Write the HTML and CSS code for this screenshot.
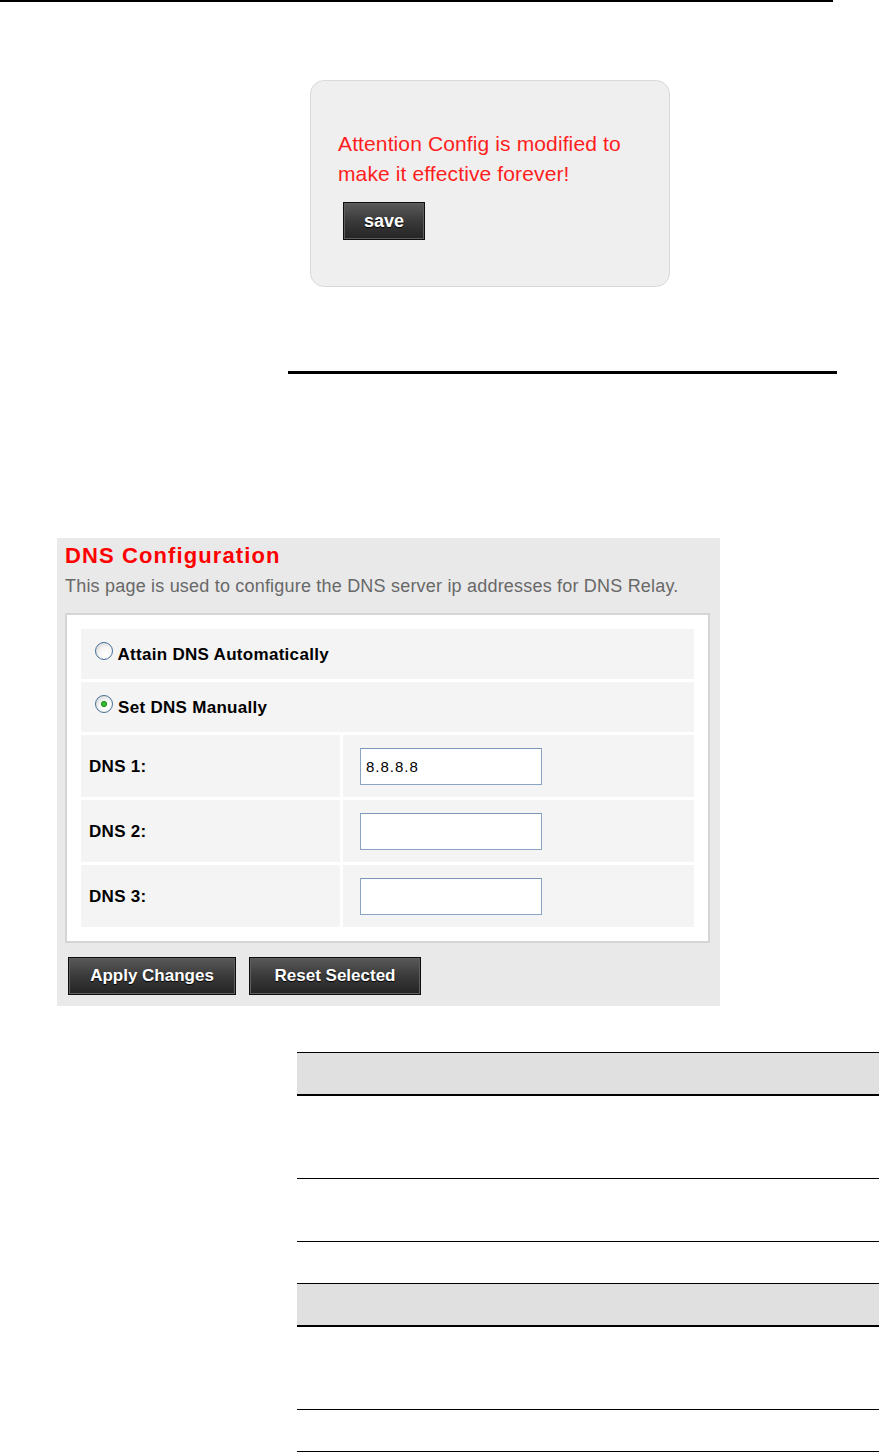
FILE: index.html
```html
<!DOCTYPE html>
<html>
<head>
   <meta charset="utf-8">
   <title>DNS Configuration</title>
   <link rel="stylesheet" href="styles.css">
</head>
<body>
   <div class="page-rule"></div>

   <div class="notice">
       <p class="notice-text">Attention Config is modified to<br>make it effective forever!</p>
       <button type="button" class="btn btn-save">save</button>
   </div>

   <hr class="section-rule">

   <form class="dns-panel" id="dnsForm">
       <h2 class="dns-title">DNS Configuration</h2>
       <p class="dns-desc">This page is used to configure the DNS server ip addresses for DNS Relay.</p>
       <div class="dns-box">
           <table class="dns-table">
               <tr class="row-radio">
                   <td colspan="2"><label><input type="radio" name="dnsMode" value="auto"> Attain DNS Automatically</label></td>
               </tr>
               <tr class="row-radio">
                   <td colspan="2"><label><input type="radio" name="dnsMode" value="manual" checked> Set DNS Manually</label></td>
               </tr>
               <tr class="row-field">
                   <td class="label">DNS 1:</td>
                   <td><input type="text" name="dns1" value="8.8.8.8"></td>
               </tr>
               <tr class="row-field">
                   <td class="label">DNS 2:</td>
                   <td><input type="text" name="dns2"></td>
               </tr>
               <tr class="row-field">
                   <td class="label">DNS 3:</td>
                   <td><input type="text" name="dns3"></td>
               </tr>
           </table>
       </div>
       <div class="dns-actions">
           <button type="submit" class="btn btn-apply">Apply Changes</button>
           <button type="reset" class="btn btn-reset">Reset Selected</button>
       </div>
   </form>

   <div class="doc-table doc-table-first">
       <div class="doc-head"></div>
       <div class="doc-row row-lg"></div>
       <div class="doc-row row-md"></div>
   </div>

   <div class="doc-table">
       <div class="doc-head"></div>
       <div class="doc-row row-lg"></div>
       <div class="doc-row row-sm"></div>
   </div>
</body>
</html>
```

FILE: styles.css
```css
html {
    overflow: hidden;
}
body {
    margin: 0;
    font-family: "Liberation Sans", Arial, sans-serif;
    background-color: #fff;
    color: #000;
}
.page-rule {
    width: 833px;
    height: 2px;
    background-color: #000;
}

/* save notice */
.notice {
    display: flex;
    flex-direction: column;
    align-items: flex-start;
    box-sizing: border-box;
    width: 360px;
    height: 207px;
    margin: 78px 0 0 310px;
    padding: 48px 0 0 27px;
    border: 1px solid #d9d9d9;
    border-radius: 14px;
    background-color: #efefef;
}
.notice-text {
    margin: 0;
    font-size: 21px;
    line-height: 30px;
    letter-spacing: 0.12px;
    color: #ff1e1e;
}
.section-rule {
    width: 549px;
    height: 3px;
    margin: 84px 0 0 288px;
    border: none;
    background-color: #000;
}

/* buttons */
.btn {
    box-sizing: border-box;
    height: 38px;
    padding: 0;
    border: 1px solid #0d0d0d;
    border-radius: 0;
    background: linear-gradient(#5a5a5a, #3a3a3a 50%, #242424);
    box-shadow: inset 0 0 0 1px #5e5e5e;
    color: #fff;
    font-family: "Liberation Sans", Arial, sans-serif;
    font-size: 17px;
    font-weight: bold;
    text-shadow: 0 1px 1px #000;
    cursor: pointer;
}
.btn:hover {
    background: linear-gradient(#666, #2c2c2c);
}
.btn-save {
    width: 82px;
    margin: 13px 0 0 5px;
    font-size: 18px;
}
.btn-apply {
    width: 168px;
}
.btn-reset {
    width: 172px;
}

/* DNS panel */
.dns-panel {
    width: 663px;
    box-sizing: border-box;
    margin: 164px 0 0 57px;
    padding: 5px 10px 11px 8px;
    background-color: #e9e9e9;
}
.dns-title {
    margin: 0;
    font-size: 22px;
    line-height: 26px;
    font-weight: bold;
    letter-spacing: 1.1px;
    color: #ff0000;
}
.dns-desc {
    margin: 6px 0 16px;
    font-size: 18px;
    line-height: 22px;
    letter-spacing: 0.2px;
    color: #686868;
}
.dns-box {
    padding: 11px;
    border: 2px solid #d5d5d5;
    background-color: #fff;
}
.dns-table {
    width: 100%;
    border-collapse: separate;
    border-spacing: 3px;
}
.dns-table td {
    box-sizing: border-box;
    padding: 0 8px;
    background-color: #f4f4f4;
    font-size: 17px;
    line-height: 20px;
    font-weight: bold;
    letter-spacing: 0.3px;
}
.row-radio td {
    height: 50px;
    padding-bottom: 2px;
}
.row-field td {
    height: 62px;
}
.row-field td.label {
    width: 259px;
    padding-top: 2px;
}
.row-field td:last-child {
    padding-left: 17px;
}
.dns-table label {
    cursor: pointer;
}
.dns-table input[type="radio"] {
    appearance: none;
    -webkit-appearance: none;
    box-sizing: border-box;
    width: 18px;
    height: 18px;
    margin: 0 0 0 6px;
    border: 1px solid #46709a;
    border-radius: 50%;
    background: radial-gradient(circle at 65% 70%, #fff 0, #f6f6f6 45%, #cfcfcf 100%);
    vertical-align: 0;
    cursor: pointer;
}
.dns-table input[type="radio"]:checked {
    background:
        radial-gradient(circle, #4cc24c 0, #239b23 2.6px, rgba(35,155,35,0) 3.6px),
        radial-gradient(circle at 65% 70%, #fff 0, #f6f6f6 45%, #cfcfcf 100%);
}
.dns-table input[type="text"] {
    box-sizing: border-box;
    width: 182px;
    height: 37px;
    padding: 0 5px;
    border: 1px solid #8aa4c3;
    border-top-color: #7a96b8;
    background-color: #fff;
    font-family: "Liberation Sans", Arial, sans-serif;
    font-size: 15px;
    letter-spacing: 1px;
    color: #000;
    vertical-align: middle;
}
.dns-table input[type="text"]:focus {
    outline: none;
    border-color: #3a78c4;
}
.dns-actions {
    display: flex;
    gap: 13px;
    margin-top: 14px;
    padding-left: 3px;
}

/* manual tables below */
.doc-table {
    margin: 41px 0 0 297px;
}
.doc-table-first {
    margin-top: 46px;
}
.doc-head {
    height: 41px;
    border-top: 1px solid #000;
    border-bottom: 2px solid #000;
    background-color: #e0e0e0;
}
.doc-row {
    border-bottom: 1px solid #000;
}
.row-lg {
    height: 82px;
}
.row-md {
    height: 62px;
}
.row-sm {
    height: 41px;
}
```
